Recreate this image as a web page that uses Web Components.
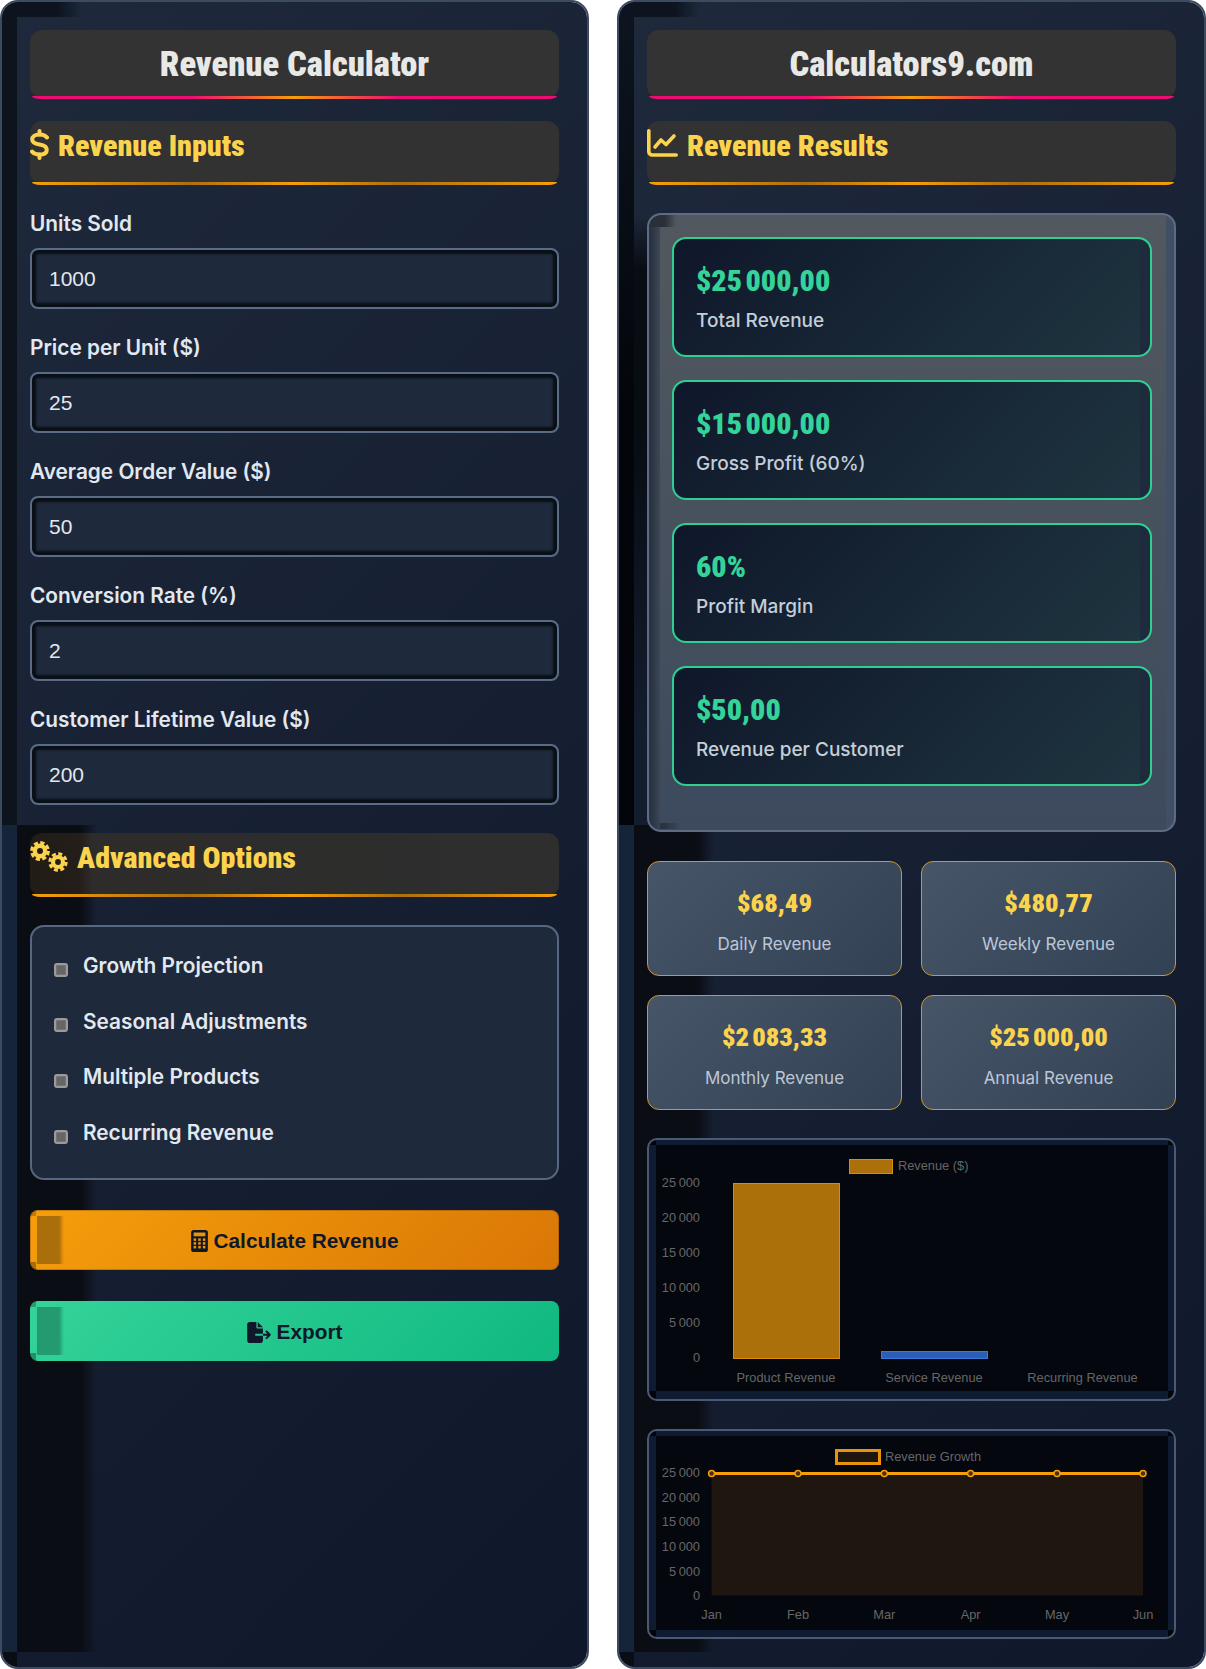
<!DOCTYPE html>
<html lang="en">
<head>
<meta charset="utf-8">
<title>Revenue Calculator</title>
<style>
    html, body { margin: 0; background: #ffffff; }
    body { font-family: "Inter", "Liberation Sans", sans-serif; }
</style>
</head>
<body>

<calc-page>
    <calc-panel side="left">
        <panel-title>Revenue Calculator</panel-title>
        <section-heading><app-icon slot="icon" name="dollar"></app-icon>Revenue Inputs</section-heading>
        <field-group label="Units Sold">1000</field-group>
        <field-group label="Price per Unit ($)">25</field-group>
        <field-group label="Average Order Value ($)">50</field-group>
        <field-group label="Conversion Rate (%)">2</field-group>
        <field-group label="Customer Lifetime Value ($)">200</field-group>
        <section-heading tint style="margin-top: 28px"><app-icon slot="icon" name="cogs"></app-icon>Advanced Options</section-heading>
        <option-list>
            <option-item>Growth Projection</option-item>
            <option-item>Seasonal Adjustments</option-item>
            <option-item>Multiple Products</option-item>
            <option-item>Recurring Revenue</option-item>
        </option-list>
        <action-button><app-icon slot="icon" name="calculator"></app-icon>Calculate Revenue</action-button>
        <action-button kind="green"><app-icon slot="icon" name="export"></app-icon>Export</action-button>
    </calc-panel>

    <calc-panel side="right">
        <panel-title>Calculators9.com</panel-title>
        <section-heading><app-icon slot="icon" name="chart"></app-icon>Revenue Results</section-heading>
        <results-box>
            <result-card value="$25&#8239;000,00">Total Revenue</result-card>
            <result-card value="$15&#8239;000,00">Gross Profit (60%)</result-card>
            <result-card value="60%">Profit Margin</result-card>
            <result-card value="$50,00">Revenue per Customer</result-card>
        </results-box>
        <mini-grid>
            <mini-card value="$68,49">Daily Revenue</mini-card>
            <mini-card value="$480,77">Weekly Revenue</mini-card>
            <mini-card value="$2&#8239;083,33">Monthly Revenue</mini-card>
            <mini-card value="$25&#8239;000,00">Annual Revenue</mini-card>
        </mini-grid>
        <bar-chart></bar-chart>
        <line-chart></line-chart>
    </calc-panel>
</calc-page>

<script>
const CONDENSED = '"Roboto Condensed", "Liberation Sans Narrow", Roboto, sans-serif'

// shared helper: every element clones its markup in an open shadow root
class ShadowElement extends HTMLElement {
    constructor( html ) {
        super()
        const template = document.createElement('template')
        template.innerHTML = html
        this.attachShadow({ mode: 'open' })
        this.shadowRoot.appendChild( template.content.cloneNode(true) )
    }
}

class CalcPage extends ShadowElement {
    constructor() {
        super(`
            <style>
                :host {
                    display: grid;
                    grid-template-columns: 589px 589px;
                    column-gap: 28px;
                    height: 1669px;
                }
            </style>
            <slot></slot>
        `)
    }
}

const strip = ( color, w, h, x, y ) => `linear-gradient(${color}, ${color}) ${x}px ${y}px / ${w}px ${h}px no-repeat`

class CalcPanel extends ShadowElement {
    constructor() {
        super(`
            <style>
                :host {
                    display: block;
                    box-sizing: border-box;
                    padding: 28px;
                    border: 2px solid #3d4b61;
                    border-radius: 18px;
                    color: #e2e8f0;
                    overflow: hidden;
                }
                /* the dark bands down the panel's left side */
                :host([side="left"]) {
                    background:
                        linear-gradient(90deg, #0d1420 58px, transparent 82px) 0 0 / 82px 17px no-repeat,
                        ${strip('#0d141e', 17, 825, 0, 0)},
                        ${strip('#16243a', 17, 827, 0, 825)},
                        ${strip('#0a0d14', 17, 20, 0, 1652)},
                        linear-gradient(90deg, #0a0d14 64px, transparent 80px) 17px 825px / 80px 827px no-repeat,
                        linear-gradient(135deg, #1e293b, #0f172a);
                    background-origin: border-box;
                    background-clip: padding-box;
                }
                :host([side="right"]) {
                    background:
                        linear-gradient(90deg, #0d1420 58px, transparent 82px) 0 0 / 82px 17px no-repeat,
                        linear-gradient(180deg, #0e1520, #03050a 50%) 0 0 / 17px 825px no-repeat,
                        ${strip('#16243a', 17, 827, 0, 825)},
                        ${strip('#0a0d14', 17, 20, 0, 1652)},
                        linear-gradient(90deg, #0a0d14 64px, transparent 80px) 17px 825px / 80px 827px no-repeat,
                        linear-gradient(180deg, transparent, #080c13 9%, #080c13 35%, #141d2e 85%) 17px 215px / 14px 610px no-repeat,
                        linear-gradient(135deg, #1e293b, #0f172a);
                    background-origin: border-box;
                    background-clip: padding-box;
                }
            </style>
            <slot></slot>
        `)
    }
}

class PanelTitle extends ShadowElement {
    constructor() {
        super(`
            <style>
                :host {
                    display: flex;
                    align-items: center;
                    justify-content: center;
                    position: relative;
                    height: 68px;
                    background: #333333;
                    border-radius: 12px;
                    color: #e8e8e6;
                    font: 900 34.5px ${CONDENSED};
                    font-stretch: condensed;
                }
                :host::after {
                    content: '';
                    position: absolute;
                    left: 2px;
                    right: 2px;
                    bottom: -1px;
                    height: 3px;
                    border-radius: 0 0 8px 8px / 0 0 3px 3px;
                    background: linear-gradient(90deg, #ec0c74, #ec0c74 30%, #f59e0b 50%, #ec0c74 70%, #ec0c74);
                }
            </style>
            <slot></slot>
        `)
    }
}

class SectionHeading extends ShadowElement {
    constructor() {
        super(`
            <style>
                :host {
                    display: flex;
                    align-items: flex-start;
                    gap: 9px;
                    position: relative;
                    box-sizing: border-box;
                    height: 63px;
                    margin: 23px 0 28px;
                    padding-top: 8px;
                    background: #323232;
                    border-radius: 12px;
                    color: #fcd34d;
                    font: 900 30px/34px ${CONDENSED};
                    font-stretch: condensed;
                }
                :host([tint]) {
                    margin-bottom: 29px;
                    background: linear-gradient(90deg, #221c17, #231e19 50px, #2d2c2b 62px, #2e2e2e);
                }
                :host::after {
                    content: '';
                    position: absolute;
                    left: 2px;
                    right: 2px;
                    bottom: -1px;
                    height: 3px;
                    border-radius: 0 0 8px 8px / 0 0 3px 3px;
                    background: linear-gradient(90deg, #f59e0b, #ad6f10 30%, #f59e0b 50%, #ad6f10 70%, #f59e0b);
                }
            </style>
            <slot name="icon"></slot>
            <slot></slot>
        `)
    }
}

class FieldGroup extends ShadowElement {
    constructor() {
        super(`
            <style>
                :host {
                    display: block;
                    margin-bottom: 27px;
                }
                label {
                    display: block;
                    height: 23px;
                    margin-bottom: 13px;
                    color: #e2e8f0;
                    font: 600 20.8px/24px "Inter", sans-serif;
                }
                .control {
                    box-sizing: border-box;
                    display: flex;
                    align-items: center;
                    height: 61px;
                    padding-left: 17px;
                    border: 2px solid #5a6b85;
                    border-radius: 8px;
                    background: #1e293b;
                    box-shadow: inset 0 0 2px 4px #0a0f17;
                    color: #e2e8f0;
                    font: 400 21px "Liberation Sans", sans-serif;
                }
            </style>
            <label></label>
            <div class="control" role="textbox"><slot></slot></div>
        `)
    }

    connectedCallback() {
        this.shadowRoot.querySelector('label').textContent = this.getAttribute('label')
    }
}

class OptionList extends ShadowElement {
    constructor() {
        super(`
            <style>
                :host {
                    display: block;
                    box-sizing: border-box;
                    height: 255px;
                    margin-bottom: 30px;
                    padding: 11px 22px 0;
                    border: 2px solid #566781;
                    border-radius: 14px;
                    background: #1e293b;
                }
            </style>
            <slot></slot>
        `)
    }
}

class OptionItem extends ShadowElement {
    constructor() {
        super(`
            <style>
                :host {
                    display: flex;
                    align-items: center;
                    gap: 15px;
                    height: 55.6px;
                    color: #e2e8f0;
                    font: 600 20.8px "Inter", sans-serif;
                }
                .box {
                    box-sizing: border-box;
                    flex: none;
                    width: 14px;
                    height: 14px;
                    margin-top: 8px;
                    border: 2px solid #9b9b9b;
                    border-radius: 3px;
                    background: #666666;
                    box-shadow: inset 0 0 0 1px #747474;
                }
            </style>
            <span class="box"></span>
            <slot></slot>
        `)
    }
}

class ActionButton extends ShadowElement {
    constructor() {
        super(`
            <style>
                :host {
                    display: flex;
                    align-items: center;
                    justify-content: center;
                    gap: 6px;
                    box-sizing: border-box;
                    height: 60px;
                    margin-bottom: 31px;
                    padding-top: 2px;
                    border-radius: 8px;
                    color: #0f172a;
                    font: 700 20.8px "Liberation Sans", sans-serif;
                    background:
                        linear-gradient(90deg, #aa6f0a 22px, transparent 27px) 7px 6px / 27px 48px no-repeat,
                        ${strip('#c07c0c', 6, 6, 0, 0)},
                        ${strip('#a86c0a', 6, 8, 0, 52)},
                        linear-gradient(135deg, #f59e0b, #d97706);
                    box-shadow: inset 0 0 0 1px rgba(120, 70, 10, .35);
                }
                :host([kind="green"]) {
                    background:
                        linear-gradient(90deg, #239a70 22px, transparent 27px) 7px 6px / 27px 48px no-repeat,
                        ${strip('#2b9a70', 6, 6, 0, 0)},
                        ${strip('#259068', 6, 8, 0, 52)},
                        linear-gradient(135deg, #34d399, #10b981);
                    box-shadow: none;
                }
            </style>
            <slot name="icon"></slot>
            <slot></slot>
        `)
    }
}

class ResultsBox extends ShadowElement {
    constructor() {
        super(`
            <style>
                :host {
                    display: block;
                    box-sizing: border-box;
                    height: 619px;
                    margin-top: 29px;
                    margin-bottom: 29px;
                    padding: 22px 22px 0 23px;
                    border: 2px solid #5d6c85;
                    border-radius: 14px;
                    background:
                        linear-gradient(90deg, #2a3342 20%, rgba(60, 70, 85, .9)) 0 12px / 11px 602px no-repeat,
                        linear-gradient(90deg, #2b2f38 16px, transparent 27px) 0 0 / 27px 12px no-repeat,
                        linear-gradient(90deg, #2a3342 16px, transparent 32px) 0 608px / 32px 6px no-repeat,
                        linear-gradient(#414f64, #414f64) right 0 top 0 / 8px 100% no-repeat,
                        linear-gradient(180deg, #52585f, #3d4a5d);
                }
            </style>
            <slot></slot>
        `)
    }
}

class ResultCard extends ShadowElement {
    constructor() {
        super(`
            <style>
                :host {
                    display: block;
                    box-sizing: border-box;
                    height: 120px;
                    margin-bottom: 23px;
                    padding: 23px 22px 0;
                    border: 2px solid #2fcf92;
                    border-radius: 14px;
                    background:
                        linear-gradient(#1e2b3c, #1e2b3c) right 0 top 0 / 10px 100% no-repeat,
                        linear-gradient(135deg, #0f172a, #1f3540);
                    color: #c4ced9;
                    font: 500 19px/24px "Inter", sans-serif;
                }
                .value {
                    height: 38px;
                    margin-bottom: 9px;
                    color: #34d399;
                    font: 900 30px/38px ${CONDENSED};
                    font-stretch: condensed;
                }
            </style>
            <div class="value"></div>
            <slot></slot>
        `)
    }

    connectedCallback() {
        this.shadowRoot.querySelector('.value').textContent = this.getAttribute('value')
    }
}

class MiniGrid extends ShadowElement {
    constructor() {
        super(`
            <style>
                :host {
                    display: grid;
                    grid-template-columns: 255px 255px;
                    gap: 19px;
                    margin-bottom: 28px;
                }
            </style>
            <slot></slot>
        `)
    }
}

class MiniCard extends ShadowElement {
    constructor() {
        super(`
            <style>
                :host {
                    display: block;
                    box-sizing: border-box;
                    height: 115px;
                    padding-top: 24px;
                    border: 1.5px solid #d9941e;
                    border-radius: 12px;
                    background: linear-gradient(135deg, #475569, #334155);
                    color: #bcc7d6;
                    text-align: center;
                    font: 400 17px/22px "Inter", sans-serif;
                }
                .value {
                    height: 34px;
                    margin-bottom: 13px;
                    color: #fcd34d;
                    font: 900 26.5px/34px ${CONDENSED};
                    font-stretch: condensed;
                }
            </style>
            <div class="value"></div>
            <slot></slot>
        `)
    }

    connectedCallback() {
        this.shadowRoot.querySelector('.value').textContent = this.getAttribute('value')
    }
}

const CHART_STYLE = `
    :host {
        display: block;
        box-sizing: border-box;
        margin-bottom: 28px;
        padding: 5px 6px 8px 7px;
        border: 2px solid #4a5a74;
        border-radius: 10px;
        background:
            ${strip('#02040a', 7, 5, 0, 0)},
            ${strip('#02040a', 6, 5, 519, 0)},
            ${strip('#02040a', 7, 8, 0, 251)},
            ${strip('#02040a', 6, 8, 519, 251)},
            #0e1b30;
    }
    svg { display: block; background: #04070e; }
    text { font: 12.8px "Liberation Sans", sans-serif; fill: #666666; dominant-baseline: central; }
    .end { text-anchor: end; }
    .mid { text-anchor: middle; }
`
const NNBSP = '\u202f'
const yLabel = ( y, value ) => `<text class="end" x="44" y="${y}">${value}</text>`

class BarChart extends ShadowElement {
    constructor() {
        const ticks = ['25' + NNBSP + '000', '20' + NNBSP + '000', '15' + NNBSP + '000', '10' + NNBSP + '000', '5' + NNBSP + '000', '0']
        super(`
            <style>${CHART_STYLE}</style>
            <svg width="512" height="246" viewBox="0 0 512 246">
                <rect x="193.5" y="14.5" width="43" height="14" fill="#ab700a" stroke="#d78c0a"/>
                <text x="242" y="20">Revenue ($)</text>
                ${ticks.map( (tick, index) => yLabel(37 + index * 35, tick) ).join('')}
                <rect x="77.5" y="38.5" width="106" height="175" fill="#ab700a" stroke="#d78c0a"/>
                <rect x="225.5" y="206.5" width="106" height="7" fill="#2b5fb5" stroke="#3b78dc"/>
                <text class="mid" x="130" y="232">Product Revenue</text>
                <text class="mid" x="278" y="232">Service Revenue</text>
                <text class="mid" x="426.5" y="232">Recurring Revenue</text>
            </svg>
        `)
    }
}

class LineChart extends ShadowElement {
    constructor() {
        const ticks = ['25' + NNBSP + '000', '20' + NNBSP + '000', '15' + NNBSP + '000', '10' + NNBSP + '000', '5' + NNBSP + '000', '0']
        const months = ['Jan', 'Feb', 'Mar', 'Apr', 'May', 'Jun']
        const xs = [55.6, 142, 228.3, 314.6, 401, 487]
        const ys = [36, 61, 85, 110, 135, 159]
        super(`
            <style>${CHART_STYLE}
                :host {
                    margin-bottom: 0;
                    padding-bottom: 7px;
                    background:
                        ${strip('#02040a', 7, 5, 0, 0)},
                        ${strip('#02040a', 6, 5, 519, 0)},
                        ${strip('#02040a', 7, 7, 0, 199)},
                        ${strip('#02040a', 6, 7, 519, 199)},
                        #0e1b30;
                }
            </style>
            <svg width="512" height="194" viewBox="0 0 512 194">
                <rect x="180.5" y="14.5" width="43" height="13" fill="#1f170f" stroke="#e8930a" stroke-width="3"/>
                <text x="229" y="20">Revenue Growth</text>
                ${ys.map( (y, index) => yLabel(y, ticks[index]) ).join('')}
                <rect x="55.6" y="37.5" width="431.4" height="122" fill="#1f170f"/>
                <line x1="55.6" x2="487" y1="37.5" y2="37.5" stroke="#f59e0b" stroke-width="3"/>
                ${xs.map( x => `<circle cx="${x}" cy="37.5" r="3" fill="#4a3210" stroke="#f59e0b" stroke-width="1.5"/>` ).join('')}
                ${xs.map( (x, index) => `<text class="mid" x="${x}" y="178">${months[index]}</text>` ).join('')}
            </svg>
        `)
    }
}

const ICONS = {
    dollar: `<svg width="19" height="31" viewBox="0 0 19 31" fill="none" stroke="#fcd34d" stroke-width="4" stroke-linecap="round">
                <path d="M17 8.5C15.5 6.5 12.5 5.5 9.5 5.5C5 5.5 2.2 7.5 2.2 10.5C2.2 13.5 5 14.7 9.5 15.5C14 16.3 16.8 17.7 16.8 20.7C16.8 23.7 14 25.5 9.5 25.5C6.5 25.5 3.5 24.5 2 22.5"/>
                <path d="M9.5 2V5.5M9.5 25.5V29"/>
            </svg>`,
    chart: `<svg width="31" height="28" viewBox="0 0 31 28" fill="none" stroke="#fcd34d" stroke-width="3.6" stroke-linecap="round" stroke-linejoin="round">
                <path d="M1.8 1.8V22.5a3.5 3.5 0 0 0 3.5 3.5H29.2"/>
                <path d="M8 18L14 11L19 15.5L27 7"/>
            </svg>`,
    cogs: `<svg width="38" height="31" viewBox="0 0 38 31" fill="none" stroke="#fcd34d">
                <circle cx="10" cy="10" r="5.2" stroke-width="4.4"/>
                <circle cx="10" cy="10" r="8.4" stroke-width="3" stroke-dasharray="4.2 2.4"/>
                <circle cx="28" cy="21" r="5" stroke-width="4.2"/>
                <circle cx="28" cy="21" r="8.2" stroke-width="3" stroke-dasharray="4 2.44"/>
            </svg>`,
    calculator: `<svg width="17" height="22" viewBox="0 0 16 21">
                <rect width="16" height="21" rx="2.5" fill="#0f172a"/>
                <rect x="2.4" y="2.4" width="11.2" height="3.6" fill="#ea9409"/>
                ${[8, 11.6, 15.2].map( y => [2.4, 6.8, 11.2].map( x => `<rect x="${x}" y="${y}" width="2.4" height="2.4" fill="#ea9409"/>` ).join('') ).join('')}
            </svg>`,
    export: `<svg width="24" height="21" viewBox="0 0 576 512" fill="#0f172a">
                <path d="M0 64C0 28.7 28.7 0 64 0H224V128c0 17.7 14.3 32 32 32H384V288H216c-13.3 0-24 10.7-24 24s10.7 24 24 24H384V448c0 35.3-28.7 64-64 64H64c-35.3 0-64-28.7-64-64V64zM384 336V288H494.1l-39-39c-9.4-9.4-9.4-24.6 0-33.9s24.6-9.4 33.9 0l80 80c9.4 9.4 9.4 24.6 0 33.9l-80 80c-9.4 9.4-24.6 9.4-33.9 0s-9.4-24.6 0-33.9l39-39H384zm0-208H256V0L384 128z"/>
            </svg>`
}

class AppIcon extends HTMLElement {
    constructor() {
        super()
        this.attachShadow({ mode: 'open' })
    }

    connectedCallback() {
        this.shadowRoot.innerHTML = `<style>:host { display: inline-flex; flex: none; } svg { display: block; }</style>${ICONS[ this.getAttribute('name') ]}`
    }
}

customElements.define('calc-page', CalcPage)
customElements.define('calc-panel', CalcPanel)
customElements.define('panel-title', PanelTitle)
customElements.define('section-heading', SectionHeading)
customElements.define('field-group', FieldGroup)
customElements.define('option-list', OptionList)
customElements.define('option-item', OptionItem)
customElements.define('action-button', ActionButton)
customElements.define('results-box', ResultsBox)
customElements.define('result-card', ResultCard)
customElements.define('mini-grid', MiniGrid)
customElements.define('mini-card', MiniCard)
customElements.define('bar-chart', BarChart)
customElements.define('line-chart', LineChart)
customElements.define('app-icon', AppIcon)
</script>
</body>
</html>
